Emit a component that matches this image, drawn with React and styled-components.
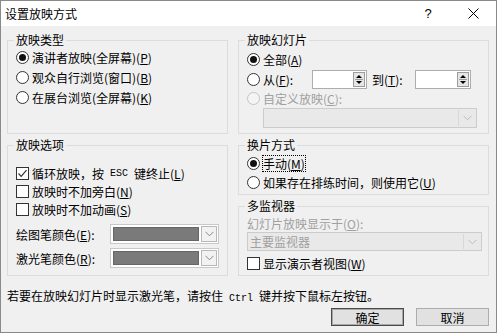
import React from "react";
import styled, { createGlobalStyle } from "styled-components";

const GlobalStyle = createGlobalStyle`
  body {
    margin: 0;
    background: #fff;
  }
  * {
    box-sizing: border-box;
  }
`;

const Dialog = styled.div`
  width: 497px;
  height: 333px;
  border: 1px solid #8a8a8a;
  background: #f0f0f0;
  font-family: "Noto Sans CJK SC", "Liberation Sans", sans-serif;
  font-size: 12px;
  color: #000;
  display: flex;
  flex-direction: column;
`;

const TitleBar = styled.div`
  height: 25px;
  background: #fff;
  display: flex;
  align-items: center;
  padding: 0 0 0 4px;
`;

const TitleText = styled.span`
  flex: 1;
  line-height: 14px;
`;

const TitleButton = styled.div`
  width: ${p => p.$w}px;
  height: 25px;
  display: flex;
  align-items: center;
  justify-content: center;
  font-family: "Liberation Sans", sans-serif;
  font-size: 13px;
`;

const Body = styled.div`
  padding: 7px 7px 0 6px;
`;

const Columns = styled.div`
  display: grid;
  grid-template-columns: 221px 251px;
  column-gap: 10px;
`;

const Column = styled.div`
  display: flex;
  flex-direction: column;
  gap: 4px;
`;

const Group = styled.fieldset`
  margin: 0;
  padding: 0;
  border: 1px solid #dcdcdc;
  height: ${p => p.$h}px;
  min-width: 0;
`;

const Legend = styled.legend`
  padding: 0 2px;
  margin-left: 6px;
  line-height: 14px;
  color: ${p => (p.$disabled ? "#a0a0a0" : "#000")};
`;

const GroupInner = styled.div`
  padding: ${p => p.$pt || 0}px 0 0 8px;
  display: flex;
  flex-direction: column;
`;

const Row = styled.div`
  display: flex;
  align-items: center;
  height: ${p => p.$h || 20}px;
  margin-top: ${p => p.$mt || 0}px;
  color: ${p => (p.$disabled ? "#a0a0a0" : "#000")};
  white-space: nowrap;
`;

const RadioMark = styled.span`
  width: 13px;
  height: 13px;
  flex: none;
  border-radius: 50%;
  border: 1px solid ${p => (p.$disabled ? "#c4c4c4" : "#333")};
  background: ${p => (p.$disabled ? "#f4f4f4" : "#fff")};
  margin-right: 3px;
  display: flex;
  align-items: center;
  justify-content: center;

  &::after {
    content: "";
    width: 7px;
    height: 7px;
    border-radius: 50%;
    background: #111;
    display: ${p => (p.$checked ? "block" : "none")};
  }
`;

const CheckMark = styled.span`
  width: 13px;
  height: 13px;
  flex: none;
  border: 1px solid #333;
  background: #fff;
  margin-right: 3px;
  display: flex;
  align-items: center;
  justify-content: center;
`;

const Key = styled.u`
  text-decoration: underline;
  text-underline-offset: 1px;
`;

const Mono = styled.span`
  font-family: "Liberation Mono", "DejaVu Sans Mono", monospace;
  font-size: 10px;
  padding: 0 6px;
`;

const Focus = styled.span`
  outline: 1px dotted #000;
  outline-offset: 0;
  line-height: 15px;
`;

const Label = styled.span`
  width: ${p => p.$w}px;
  flex: none;
  padding-left: ${p => p.$pl || 0}px;
`;

const SpinBox = styled.div`
  width: ${p => p.$w}px;
  height: 19px;
  border: 1px solid #adadad;
  background: #fff;
  display: flex;
  justify-content: flex-end;
  align-items: center;
  padding-right: 1px;
`;

const SpinButton = styled.div`
  width: 12px;
  height: 15px;
  background: #e6e6e6;
  border: 1px solid #9c9c9c;
  display: flex;
  align-items: center;
  justify-content: center;
`;

const Select = styled.div`
  width: ${p => p.$w}px;
  height: ${p => p.$h || 20}px;
  margin-left: ${p => p.$ml || 0}px;
  border: 1px solid #cccccc;
  background: #e9e9e9;
  color: #a0a0a0;
  display: flex;
  align-items: center;
  padding-left: 2px;
`;

const SelectText = styled.span`
  flex: 1;
`;

const SelectArrow = styled.div`
  width: 17px;
  align-self: stretch;
  margin: 1px;
  border-left: 1px solid #d8d8d8;
  display: flex;
  align-items: center;
  justify-content: center;
`;

const ColorRow = styled.div`
  display: flex;
  align-items: center;
  height: 20px;
  margin-top: ${p => p.$mt || 0}px;
`;

const ColorCombo = styled.div`
  width: 109px;
  height: 20px;
  margin-left: auto;
  margin-right: 8px;
  border: 1px solid #c8c8c8;
  background: #fff;
  display: flex;
  align-items: stretch;
  padding: 2px;
  gap: 2px;
`;

const Swatch = styled.div`
  flex: 1;
  background: ${p => p.$color};
  border: 1px solid #666;
`;

const ComboArrow = styled.div`
  width: 16px;
  margin: -1px -1px -1px 0;
  border: 1px solid #b8b8b8;
  background: #f2f2f2;
  display: flex;
  align-items: center;
  justify-content: center;
`;

const Footer = styled.div`
  padding: 12px 7px 0 6px;
`;

const Hint = styled.div`
  line-height: 16px;
  white-space: nowrap;
`;

const Buttons = styled.div`
  display: flex;
  justify-content: flex-end;
  gap: 12px;
  margin-top: 1px;
`;

const Button = styled.div`
  width: 73px;
  height: 18px;
  background: #e1e1e1;
  border: 1px solid ${p => (p.$primary ? "#4a4a4a" : "#adadad")};
  box-shadow: ${p => (p.$primary ? "inset 0 0 0 1px #a8a8a8" : "none")};
  display: flex;
  align-items: center;
  justify-content: center;
  font-size: 12px;
`;

const Chevron = ({ color = "#888" }) => (
  <svg width="9" height="6" viewBox="0 0 9 6">
    <polyline points="0.5,0.8 4.5,4.8 8.5,0.8" fill="none" stroke={color} strokeWidth="1" />
  </svg>
);

const SpinArrows = () => (
  <svg width="8" height="11" viewBox="0 0 8 11">
    <polygon points="4,1 7,4 1,4" fill="#000" />
    <line x1="0" y1="5.5" x2="8" y2="5.5" stroke="#9c9c9c" strokeWidth="1" />
    <polygon points="1,7 7,7 4,10" fill="#000" />
  </svg>
);

const Tick = () => (
  <svg width="11" height="11" viewBox="0 0 11 11">
    <polyline points="1.5,5.5 4.2,8.3 9.5,2.2" fill="none" stroke="#333" strokeWidth="1.2" />
  </svg>
);

const Close = () => (
  <svg width="11" height="11" viewBox="0 0 11 11">
    <line x1="0.5" y1="0.5" x2="10.5" y2="10.5" stroke="#000" strokeWidth="1" />
    <line x1="10.5" y1="0.5" x2="0.5" y2="10.5" stroke="#000" strokeWidth="1" />
  </svg>
);

const Radio = ({ checked, disabled, children, h }) => (
  <Row $h={h} $disabled={disabled}>
    <RadioMark $checked={checked} $disabled={disabled} />
    {children}
  </Row>
);

const Check = ({ checked, children, h, mt }) => (
  <Row $h={h} $mt={mt}>
    <CheckMark>{checked && <Tick />}</CheckMark>
    {children}
  </Row>
);

const Spin = ({ w }) => (
  <SpinBox $w={w}>
    <SpinButton>
      <SpinArrows />
    </SpinButton>
  </SpinBox>
);

const ColorPicker = ({ color }) => (
  <ColorCombo>
    <Swatch $color={color} />
    <ComboArrow>
      <Chevron />
    </ComboArrow>
  </ColorCombo>
);

export default function App() {
  return (
    <Dialog>
      <GlobalStyle />
      <TitleBar>
        <TitleText>设置放映方式</TitleText>
        <TitleButton $w={44}>?</TitleButton>
        <TitleButton $w={46}>
          <Close />
        </TitleButton>
      </TitleBar>

      <Body>
        <Columns>
          <Column>
            <Group $h={101}>
              <Legend>放映类型</Legend>
              <GroupInner>
                <Radio checked>演讲者放映(全屏幕)(<Key>P</Key>)</Radio>
                <Radio>观众自行浏览(窗口)(<Key>B</Key>)</Radio>
                <Radio>在展台浏览(全屏幕)(<Key>K</Key>)</Radio>
              </GroupInner>
            </Group>

            <Group $h={138}>
              <Legend>放映选项</Legend>
              <GroupInner $pt={12}>
                <Check checked h={18}>
                  循环放映，按<Mono>ESC</Mono>键终止(<Key>L</Key>)
                </Check>
                <Check h={18}>放映时不加旁白(<Key>N</Key>)</Check>
                <Check h={18}>放映时不加动画(<Key>S</Key>)</Check>
              </GroupInner>
              <GroupInner $pt={6}>
                <ColorRow>
                  绘图笔颜色(<Key>E</Key>):
                  <ColorPicker color="#7a7a7a" />
                </ColorRow>
                <ColorRow $mt={4}>
                  激光笔颜色(<Key>R</Key>):
                  <ColorPicker color="#7a7a7a" />
                </ColorRow>
              </GroupInner>
            </Group>
          </Column>

          <Column>
            <Group $h={101}>
              <Legend>放映幻灯片</Legend>
              <GroupInner $pt={2}>
                <Radio checked>
                  全部(<Key>A</Key>)
                </Radio>
                <Row>
                  <RadioMark />
                  <Label $w={49}>
                    从(<Key>F</Key>):
                  </Label>
                  <Spin w={55} />
                  <Label $w={48} $pl={5}>
                    到(<Key>T</Key>):
                  </Label>
                  <Spin w={56} />
                </Row>
                <Radio disabled h={19}>
                  自定义放映(<Key>C</Key>):
                </Radio>
                <Select $w={214} $ml={16}>
                  <SelectText />
                  <SelectArrow>
                    <Chevron color="#bdbdbd" />
                  </SelectArrow>
                </Select>
              </GroupInner>
            </Group>

            <Group $h={57}>
              <Legend>换片方式</Legend>
              <GroupInner $pt={2}>
                <Radio checked h={19}>
                  <Focus>
                    手动(<Key>M</Key>)
                  </Focus>
                </Radio>
                <Radio h={19}>如果存在排练时间，则使用它(<Key>U</Key>)</Radio>
              </GroupInner>
            </Group>

            <Group $h={77}>
              <Legend>多监视器</Legend>
              <GroupInner $pt={2}>
                <Row $h={17} $disabled>
                  幻灯片放映显示于(<Key>O</Key>):
                </Row>
                <Select $w={235} $h={19}>
                  <SelectText>主要监视器</SelectText>
                  <SelectArrow>
                    <Chevron color="#bdbdbd" />
                  </SelectArrow>
                </Select>
                <Check h={18} mt={3}>
                  显示演示者视图(<Key>W</Key>)
                </Check>
              </GroupInner>
            </Group>
          </Column>
        </Columns>
      </Body>

      <Footer>
        <Hint>
          若要在放映幻灯片时显示激光笔，请按住<Mono>Ctrl</Mono>键并按下鼠标左按钮。
        </Hint>
        <Buttons>
          <Button $primary>确定</Button>
          <Button>取消</Button>
        </Buttons>
      </Footer>
    </Dialog>
  );
}
